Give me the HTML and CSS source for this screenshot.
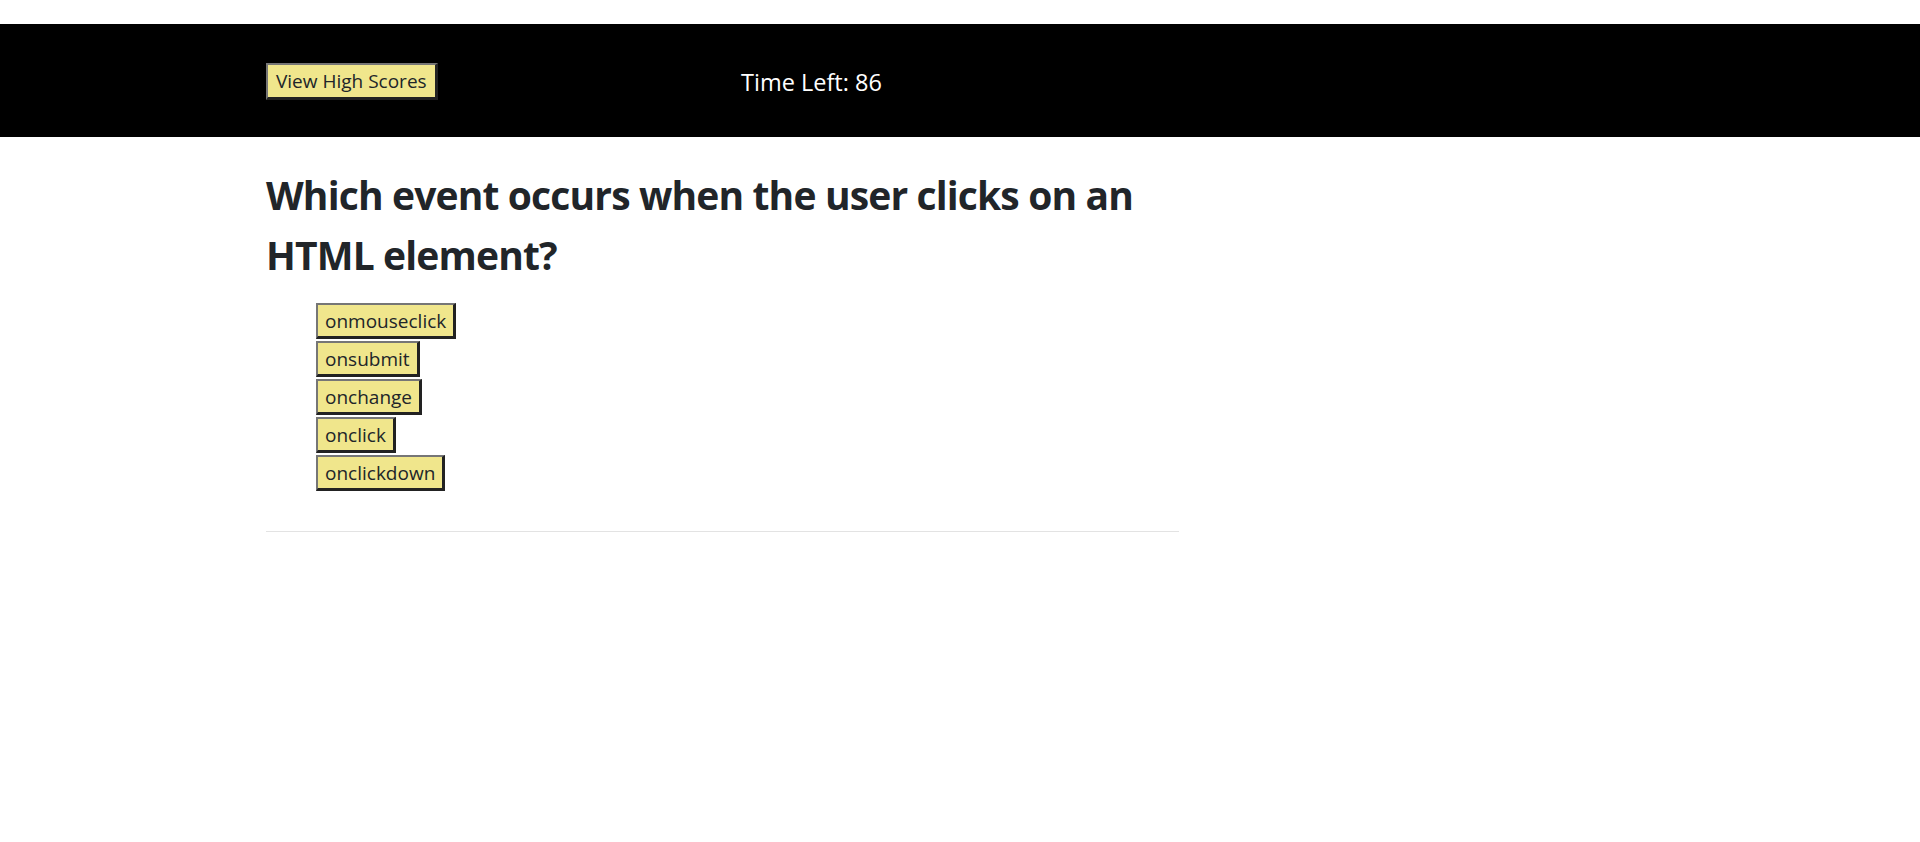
FILE: index.html
```html
<!DOCTYPE html>
<html lang="en">
<head>
<meta charset="utf-8">
<title>Code Quiz</title>
<link rel="stylesheet" href="styles.css">
</head>
<body>
<header class="topbar">
  <div class="topbar-left">
    <button class="btn-khaki btn-scores" type="button">View High Scores</button>
  </div>
  <div class="timer">Time Left: 86</div>
</header>
<main class="quiz">
  <h2 class="question">Which event occurs when the user clicks on an HTML element?</h2>
  <ul class="answers">
    <li><button class="btn-khaki" type="button">onmouseclick</button></li>
    <li><button class="btn-khaki" type="button">onsubmit</button></li>
    <li><button class="btn-khaki" type="button">onchange</button></li>
    <li><button class="btn-khaki" type="button">onclick</button></li>
    <li><button class="btn-khaki" type="button">onclickdown</button></li>
  </ul>
  <hr class="divider">
</main>
</body>
</html>
```

FILE: styles.css
```css
html, body {
  margin: 0;
  padding: 0;
  background: #ffffff;
}

body {
  font-family: "Open Sans", "Noto Sans", sans-serif;
  color: #212529;
  font-size: 20px;
  line-height: 1.5;
}

.topbar {
  margin-top: 24px;
  height: 113px;
  background: #000000;
  display: flex;
  align-items: center;
  padding-left: 266px;
  box-sizing: border-box;
}

.topbar-left {
  width: 475px;
  display: flex;
  align-items: center;
}

.timer {
  color: #ffffff;
  font-size: 23.5px;
  line-height: 30px;
  margin-top: 2px;
}

.btn-khaki {
  font-family: inherit;
  font-size: 19px;
  line-height: 30px;
  color: #212529;
  background: #f0e68c;
  border-style: solid;
  border-width: 2px 3px 3px 2px;
  border-color: #767676 #222222 #222222 #767676;
  padding: 0 7px;
  margin: 0;
  border-radius: 0;
  cursor: pointer;
  box-sizing: border-box;
  height: 36px;
}

.btn-scores {
  height: 37px;
  padding: 0 8px;
  margin-top: 1px;
}

.quiz {
  padding-left: 266px;
  width: 913px;
}

.question {
  font-size: 39px;
  line-height: 60px;
  font-weight: 700;
  margin: 28px 0 0 0;
  letter-spacing: -0.85px;
}

.answers {
  list-style: none;
  margin: 18px 0 0 0;
  padding: 0 0 0 50px;
  display: flex;
  flex-direction: column;
  align-items: flex-start;
  gap: 2px;
}

.answers li {
  display: block;
}

.divider {
  margin: 40px 0 0 0;
  border: 0;
  border-top: 1px solid #e3e3e3;
  height: 0;
}
```
